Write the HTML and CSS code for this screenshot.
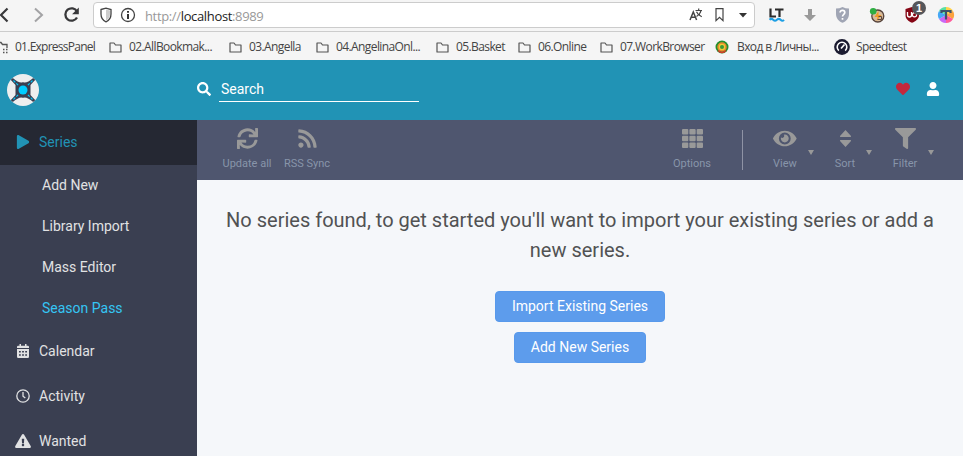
FILE: index.html
```html
<!DOCTYPE html>
<html lang="en">
<head>
<meta charset="utf-8">
<title>Sonarr</title>
<link rel="stylesheet" href="styles.css">
</head>
<body>
<div class="browser">
  <div class="navbar">
    <svg class="nav-buttons" width="93" height="31" fill="none">
      <path d="M7.500 8.500L1 15l6.500 6.500" stroke="#38383a" stroke-width="2.200"/>
      <path d="M35 8.500L42 15l-7 6.500" stroke="#a3a3a5" stroke-width="2"/>
      <path d="M77 11.500A6.200 6.200 0 1 0 77 17.500" stroke="#38383a" stroke-width="2.300"/>
      <path d="M78.800 7.500v6.700h-6.700z" fill="#38383a"/>
    </svg>
    <div class="urlbar">
      <svg class="url-icons" width="42" height="20" fill="none">
        <path d="M7 4.500L12 3.200L17 4.500V9c0 4-2 6.600-5 7.800C9 15.600 7 13 7 9z" stroke="#444" stroke-width="1.300"/>
        <path d="M12 4.500l4 1V9c0 3-1.500 5.500-4 6.600z" fill="#ccc"/>
        <circle cx="34" cy="10" r="6.500" stroke="#444" stroke-width="1.300"/>
        <path d="M34 6v1.800M34 9v5" stroke="#333" stroke-width="2"/>
      </svg>
      <div class="url"><span>http://</span>localhost<span>:8989</span></div>
      <svg class="url-tools" width="66" height="20" fill="none" stroke="#444">
        <path d="M2 15L5.300 7L8.600 15M3.200 12.200h4.200" stroke-width="1.500"/>
        <path d="M7.500 5.500h6.500M10.700 3.500v2M13 5.500c-.6 3-2 4.500-4.500 6M8.500 6.700c1.200 2.800 3 4.200 5.300 5" stroke-width="1.200"/>
        <path d="M28 3.700h7v12l-3.500-3.300L28 15.700z" stroke-width="1.200"/>
        <path d="M51 8h8l-4 4.600z" fill="#333" stroke="none"/>
      </svg>
    </div>
    <svg class="extensions" width="208" height="31" fill="none">
      <path d="M23.500 8.500v8h5.500M28 9.500h8.500M32.500 9.500v7.500" stroke="#2b2b2b" stroke-width="2.200"/>
      <path d="M22.500 19.800q1.900-1.800 3.700 0t3.700 0t3.700 0t3.400 0" stroke="#1d9fe4" stroke-width="2"/>
      <path d="M61 9h4v6h4l-6 6-6-6h4z" fill="#9a9a9a"/>
      <path d="M89 8.500q3.500 0 6.500-1.500q3 1.500 6.500 1.500V14c0 4.500-2.800 7.300-6.500 8.800C91.800 21.300 89 18.500 89 14z" fill="#a0a5b4"/>
      <path d="M93.100 12.500c0-3 4.700-2.700 4.700 0c0 1.800-2.300 1.800-2.300 4M95.500 18v1.800" stroke="#fff" stroke-width="1.700"/>
      <circle cx="130.800" cy="16" r="6" fill="#d8bb9c" stroke="#55423a" stroke-width="1.300"/>
      <path d="M131.500 11l-4 6h3l-1 4l5-6h-3z" fill="#f29a22"/>
      <path d="M130.500 19.500h4v-3h-3" stroke="#60483c"/>
      <circle cx="126.200" cy="11.200" r="3.300" fill="#2eae42"/>
      <path d="M158.500 9l6.500-2L172 9v6c0 4-3.300 6.300-7 7.800c-3.700-1.500-6.500-3.800-6.500-7.800z" fill="#850514"/>
      <path d="M160.500 12v3q0 2 2 2t2-2v-3" stroke="#fff" stroke-width="1.300"/>
      <circle cx="167.500" cy="14.700" r="2.100" stroke="#fff" stroke-width="1.200"/>
      <circle cx="172" cy="8" r="7" fill="#56565a"/>
      <path d="M199 15V7a8 8 0 0 1 7 4z" fill="#ffd24d"/>
      <path d="M199 15l7-4a8 8 0 0 1 0 8z" fill="#fba33f"/>
      <path d="M199 15l7 4a8 8 0 0 1-7 4z" fill="#ff5b9a"/>
      <path d="M199 15v8a8 8 0 0 1-7-4z" fill="#c968f5"/>
      <path d="M199 15l-7 4a8 8 0 0 1 0-8z" fill="#45a7f5"/>
      <path d="M199 15l-7-4a8 8 0 0 1 7-4z" fill="#57e0a5"/>
      <path d="M194.500 13v-2h9v2M199 11v8.500" stroke="#3e536c" stroke-width="2.200"/>
      <text x="172" y="12" class="badge">1</text>
    </svg>
  </div>
  <div class="bookmarks">
    <div class="bookmark first"><svg width="16" height="16" fill="none" stroke="#555" stroke-width="1.300"><path d="M0 3.500h2l1.500 2H8V9M0 13.500h1"/><path d="M4 10.500h5M4 13.500h5" stroke-dasharray="1.500 1.500" stroke-width="1.600"/></svg><span>01.ExpressPanel</span></div>
    <div class="bookmark"><svg width="16" height="16"><use href="#folder"/></svg><span>02.AllBookmak...</span></div>
    <div class="bookmark"><svg width="16" height="16"><use href="#folder"/></svg><span>03.Angella</span></div>
    <div class="bookmark"><svg width="16" height="16"><use href="#folder"/></svg><span>04.AngelinaOnl...</span></div>
    <div class="bookmark"><svg width="16" height="16"><use href="#folder"/></svg><span>05.Basket</span></div>
    <div class="bookmark"><svg width="16" height="16"><use href="#folder"/></svg><span>06.Online</span></div>
    <div class="bookmark"><svg width="16" height="16"><use href="#folder"/></svg><span>07.WorkBrowser</span></div>
    <div class="bookmark site"><svg width="16" height="16" fill="none"><circle cx="7" cy="8" r="6.500" fill="#25902c"/><circle cx="7" cy="8" r="4" fill="#f0cb35" stroke="#e98a2c" stroke-width="1.500"/><circle cx="7" cy="8" r="2" fill="#3c9a35"/><path d="M3 11.500q4 4 8 0" stroke="#d33c2b" stroke-width="1.300"/></svg><span>Вход в Личны...</span></div>
    <div class="bookmark site"><svg width="16" height="16" fill="none"><circle cx="8" cy="8" r="7.900" fill="#1b1b30"/><path d="M4.800 11.700a4.800 4.800 0 1 1 6.400 0" stroke="#fff" stroke-width="1.600"/><path d="M7 9.500L10.500 5.500" stroke="#fff" stroke-width="1.700"/></svg><span>Speedtest</span></div>
  </div>
</div>

<header class="header">
  <div class="logo">
    <svg width="32" height="32" viewBox="0 0 32 32" fill="none">
      <circle cx="16" cy="16" r="16" fill="#eee"/>
      <path d="M5 5q7 6 11 4.500Q20 11 27 5M5 27q7-6 11-4.500Q20 21 27 27" stroke="#3a3f51" stroke-width="2.500"/>
      <path d="M5 4.500L11 9h10l6-4.500L28 6l-4.500 5v10l4.500 5-1 1.500L21 23H11l-6 4.500L4 26l4.500-5V11L4 6z" fill="#3a3f51"/>
      <path d="M6.500 6.500l5 5M25.500 6.500l-5 5M6.500 25.500l5-5M25.500 25.500l-5-5" stroke="#0cf" stroke-width="1.100" stroke-dasharray="2.500 1.500"/>
      <circle cx="16" cy="16" r="4.500" fill="#0cf"/>
    </svg>
  </div>
  <svg class="fa search-icon" viewBox="0 0 512 512"><path d="M505 442.700L405.300 343c-4.500-4.500-10.600-7-17-7H372c27.600-35.300 44-79.700 44-128C416 93.100 322.900 0 208 0S0 93.100 0 208s93.100 208 208 208c48.300 0 92.700-16.400 128-44v16.300c0 6.400 2.500 12.500 7 17l99.700 99.700c9.400 9.400 24.600 9.400 33.900 0l28.300-28.300c9.400-9.400 9.400-24.600.1-34zM208 336c-70.700 0-128-57.200-128-128 0-70.700 57.200-128 128-128 70.700 0 128 57.200 128 128 0 70.700-57.200 128-128 128z"/></svg>
  <div class="search-input">Search</div>
  <div class="header-actions">
    <svg class="fa heart" viewBox="0 0 512 512"><path d="M462.300 62.600C407.500 15.900 326 24.300 275.700 76.200L256 96.500l-19.700-20.300C186.100 24.300 104.500 15.900 49.700 62.600c-62.800 53.600-66.100 149.800-9.900 207.900l193.500 199.800c12.500 12.900 32.800 12.900 45.300 0l193.500-199.800c56.300-58.100 53-154.300-9.800-207.900z"/></svg>
    <svg class="fa" viewBox="-32 0 512 512"><path d="M224 256c70.700 0 128-57.300 128-128S294.700 0 224 0 96 57.300 96 128s57.300 128 128 128zm89.600 32h-16.700c-22.200 10.200-46.900 16-72.900 16s-50.600-5.800-72.900-16h-16.700C60.200 288 0 348.200 0 422.400V464c0 26.500 21.500 48 48 48h352c26.500 0 48-21.500 48-48v-41.600c0-74.200-60.200-134.400-134.400-134.400z"/></svg>
  </div>
</header>

<div class="main">
  <nav class="sidebar">
    <div class="item active"><svg class="fa" viewBox="-32 0 512 512"><path d="M424.400 214.700L72.400 6.600C43.800-10.300 0 6.100 0 47.900V464c0 37.500 40.700 60.100 72.400 41.300l352-208c31.400-18.500 31.500-64.100 0-82.600z"/></svg>Series</div>
    <div class="child">Add New</div>
    <div class="child">Library Import</div>
    <div class="child">Mass Editor</div>
    <div class="child hover">Season Pass</div>
    <div class="item"><svg class="fa" viewBox="0 0 14 14"><path fill-rule="evenodd" d="M1 4V3q0-1.200 1.200-1.200H3.500V0H5v1.800h4V0h1.500v1.800h1.300Q13 1.800 13 3v1zM1 5h12v7.700q0 1.300-1.200 1.300H2.200Q1 14 1 12.700zM3 7v1.500h1.800V7zM6.100 7v1.500h1.800V7zM9.200 7v1.500H11V7zM3 10.300v1.500h1.800v-1.500zM6.100 10.300v1.500h1.800v-1.500zM9.200 10.300v1.500H11v-1.500z"/></svg>Calendar</div>
    <div class="item"><svg class="fa" viewBox="0 0 14 14"><g fill="none" stroke="currentColor" stroke-width="1.300"><circle cx="7" cy="7" r="6.200"/><path d="M7 3v4.300l2.300 1.800"/></g></svg>Activity</div>
    <div class="item"><svg class="fa warning" viewBox="0 0 576 512"><path d="M569.517 440.013C587.975 472.007 564.806 512 527.940 512H48.054c-36.937 0-59.999-40.055-41.577-71.987L246.423 23.985c18.467-32.009 64.720-31.951 83.154 0l239.940 416.028zM288 354c-25.405 0-46 20.595-46 46s20.595 46 46 46 46-20.595 46-46-20.595-46-46-46zm-43.673-165.346l7.418 136c.347 6.364 5.609 11.346 11.982 11.346h48.546c6.373 0 11.635-4.982 11.982-11.346l7.418-136c.375-6.874-5.098-12.654-11.982-12.654h-63.383c-6.884 0-12.356 5.780-11.981 12.654z"/></svg>Wanted</div>
  </nav>

  <div class="page">
    <div class="toolbar">
      <div class="tool"><svg viewBox="0 0 512 512"><path d="M440.650 12.570l4 82.770A247.160 247.160 0 0 0 255.830 8C134.730 8 33.910 94.920 12.290 209.820A12 12 0 0 0 24.090 224h49.050a12 12 0 0 0 11.670-9.260 175.910 175.910 0 0 1 317-56.940l-101.460-4.860a12 12 0 0 0-12.570 12v47.410a12 12 0 0 0 12 12H500a12 12 0 0 0 12-12V12a12 12 0 0 0-12-12h-47.370a12 12 0 0 0-11.980 12.570zM255.830 432a175.610 175.610 0 0 1-146-77.800l101.800 4.870a12 12 0 0 0 12.570-12v-47.400a12 12 0 0 0-12-12H12a12 12 0 0 0-12 12V500a12 12 0 0 0 12 12h47.350a12 12 0 0 0 12-12.600l-4.150-82.570A247.170 247.170 0 0 0 255.830 504c121.110 0 221.930-86.920 243.550-201.820a12 12 0 0 0-11.800-14.180h-49.050a12 12 0 0 0-11.670 9.260A175.860 175.860 0 0 1 255.830 432z"/></svg><span>Update all</span></div>
      <div class="tool"><svg viewBox="-32 0 512 512"><path d="M128.081 415.959c0 35.369-28.672 64.041-64.041 64.041S0 451.328 0 415.959s28.672-64.041 64.041-64.041 64.040 28.673 64.040 64.041zm175.660 47.250c-8.354-154.600-132.185-278.587-286.950-286.950C7.656 175.765 0 183.105 0 192.253v48.069c0 8.415 6.490 15.472 14.887 16.018 111.832 7.284 201.473 96.702 208.772 208.772.547 8.397 7.604 14.887 16.018 14.887h48.069c9.149.001 16.489-7.655 15.995-16.790zm144.249.288C439.596 229.677 251.465 40.445 16.503 32.010 7.473 31.686 0 38.981 0 48.016v48.068c0 8.625 6.835 15.645 15.453 15.999 191.179 7.839 344.627 161.316 352.465 352.465.353 8.618 7.373 15.453 15.999 15.453h48.068c9.034-.001 16.329-7.474 16.005-16.504z"/></svg><span>RSS Sync</span></div>
      <div class="tools-right">
        <div class="tool"><svg viewBox="0 0 21 21"><g id="row"><rect y="1" width="6.300" height="5.600" rx="1"/><rect x="7.350" y="1" width="6.300" height="5.600" rx="1"/><rect x="14.700" y="1" width="6.300" height="5.600" rx="1"/></g><use href="#row" y="6.700"/><use href="#row" y="13.400"/></svg><span>Options</span></div>
        <div class="separator"></div>
        <div class="tool menu"><svg class="eye" viewBox="0 0 576 512"><path d="M572.520 241.400C518.290 135.590 410.930 64 288 64S57.680 135.640 3.480 241.410a32.350 32.350 0 0 0 0 29.190C57.710 376.410 165.070 448 288 448s230.320-71.640 284.520-177.410a32.350 32.350 0 0 0 0-29.190zM288 400a144 144 0 1 1 144-144 143.930 143.930 0 0 1-144 144zm0-240a95.310 95.310 0 0 0-25.310 3.790 47.850 47.850 0 0 1-66.900 66.900A95.780 95.780 0 1 0 288 160z"/></svg><span>View</span><i class="caret view"></i></div>
        <div class="tool menu"><svg viewBox="0 0 21 21"><path d="M10.500 2.100L16 8q.3 1-.6 1H5.600Q4.700 9 5 8zM10.500 19L16 13q.3-1-.6-1H5.600q-.9 0-.6 1z"/></svg><span>Sort</span><i class="caret sort"></i></div>
        <div class="tool menu"><svg viewBox="0 0 512 512"><path d="M487.976 0H24.028C2.710 0-8.047 25.866 7.058 40.971L192 225.941V432c0 7.831 3.821 15.170 10.237 19.662l80 55.980C298.020 518.690 320 507.493 320 487.980V225.941l184.947-184.970C520.021 25.896 509.338 0 487.976 0z"/></svg><span>Filter</span><i class="caret filter"></i></div>
      </div>
    </div>
    <div class="content">
      <div class="message">No series found, to get started you'll want to import your existing series or add a new series.</div>
      <button class="button">Import Existing Series</button>
      <button class="button">Add New Series</button>
    </div>
  </div>
</div>

<svg width="0" height="0" class="defs"><defs><path id="folder" d="M1.500 13V4h4l1.500 2h5.500v7z" transform="translate(-.5 0)" fill="none" stroke="#555" stroke-width="1.200" stroke-linejoin="round"/></defs></svg>
</body>
</html>
```
FILE: styles.css
```css
* { box-sizing: border-box; }
body {
  margin: 0;
  height: 456px;
  overflow: hidden;
  display: flex;
  flex-direction: column;
  font: 14px/20px Roboto, "Liberation Sans", sans-serif;
  color: #515253;
}
svg { display: block; flex: none; }
.defs { position: absolute; }

.browser {
  height: 60px;
  background: #f5f5f5;
  font-family: "Open Sans", "Noto Sans", sans-serif;
  flex: none;
}
.navbar {
  height: 32px;
  display: flex;
  border-bottom: 1px solid #ccc;
}
.urlbar {
  width: 662px;
  height: 26px;
  margin-top: 2px;
  border: 1px solid #ccc;
  border-radius: 4px;
  background: #fff;
  display: flex;
  align-items: center;
}
.url {
  flex: 1;
  margin-left: 9px;
  padding-top: 2px;
  font-size: 13px;
  letter-spacing: -0.35px;
  color: #222;
}
.url span { color: #999; }
.extensions { overflow: visible; margin-left: -8px; }
.badge { font: bold 11px "Liberation Sans", sans-serif; fill: #fff; text-anchor: middle; }

.bookmarks {
  height: 28px;
  display: grid;
  grid-template-columns: 109px 120px 87px 120px 82px 82px 115px 119px 129px;
  align-items: center;
  padding-top: 1px;
  font-size: 12px;
  letter-spacing: -0.6px;
  color: #444;
}
.bookmark { display: flex; align-items: center; gap: 4px; white-space: nowrap; }
.bookmark.first { gap: 0; margin-left: -1px; letter-spacing: -0.75px; }
.bookmark.site { gap: 6px; }

.header {
  height: 60px;
  flex: none;
  display: flex;
  align-items: center;
  background: #2193b5;
  color: #fff;
}
.logo { width: 190px; margin-left: 7px; }
.fa { width: 14px; height: 14px; fill: currentColor; }
.search-input {
  width: 200px;
  height: 25px;
  margin-left: 8px;
  padding: 2px 2px 0;
  border-bottom: 1px solid #fff;
}
.header .search-icon, .search-input, .header-actions { margin-bottom: 2px; }
.header-actions { display: flex; gap: 16px; margin-left: auto; margin-right: 23px; }
.heart { color: #c4273c; }

.main { flex: 1; display: flex; min-height: 0; }
.sidebar {
  width: 197px;
  flex: none;
  background: #3a3f51;
  color: #e1e2e3;
  overflow: hidden;
}
.item {
  height: 45px;
  padding: 0 0 1px 16px;
  display: flex;
  align-items: center;
  gap: 9px;
}
.item.active { background: #252833; color: #2193b5; }
.warning { width: 16px; margin: 0 -1px; }
.child { height: 41px; padding-left: 42px; line-height: 41px; }
.hover { color: #35c5f4; }

.page { flex: 1; background: #f5f7fa; }
.toolbar {
  height: 60px;
  padding: 0 20px;
  display: flex;
  background: #4f566f;
}
.tool {
  position: relative;
  width: 60px;
  padding-top: 8px;
  display: flex;
  flex-direction: column;
  align-items: center;
  font-size: 11px;
  line-height: 16px;
  color: #8895aa;
}
.tool svg { width: 21px; height: 21px; margin-bottom: 7px; fill: #999; }
.tool .eye { width: 23.600px; }
.tools-right { display: flex; margin-left: auto; margin-right: 8px; }
.separator { width: 1px; height: 40px; margin: 10px 12px 0 20px; background: #8f93a5; }
.caret {
  position: absolute;
  top: 30px;
  border: solid transparent;
  border-width: 5px 3px 0;
  border-top-color: #999;
}
.view { left: 53px; }
.sort { left: 51px; }
.filter { left: 53px; }

.content {
  padding: 25px 20px;
  display: flex;
  flex-direction: column;
  align-items: center;
}
.message { margin-bottom: 26px; font-size: 20px; line-height: 30px; text-align: center; }
.button {
  height: 31px;
  margin-bottom: 10px;
  padding: 0 16px 1px;
  border: 1px solid #5899eb;
  border-radius: 4px;
  background: #5d9cec;
  color: #fff;
  font: inherit;
}
```
